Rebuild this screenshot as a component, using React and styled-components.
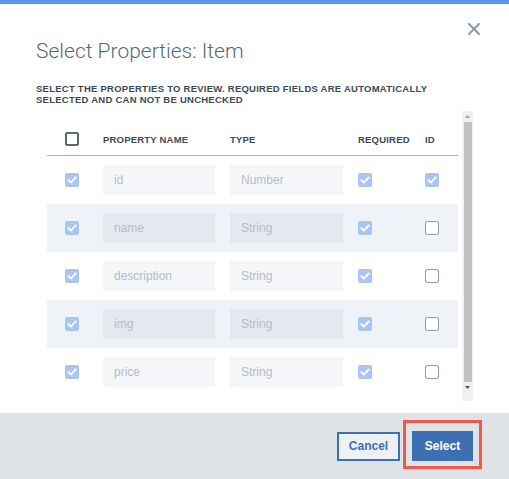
import React from "react";
import styled, { createGlobalStyle } from "styled-components";

const GlobalStyle = createGlobalStyle`
  html, body {
    margin: 0;
    padding: 0;
    background: #ffffff;
  }
  * {
    box-sizing: border-box;
  }
`;

const properties = [
  { name: "id", type: "Number", isId: true },
  { name: "name", type: "String", isId: false },
  { name: "description", type: "String", isId: false },
  { name: "img", type: "String", isId: false },
  { name: "price", type: "String", isId: false },
];

const CheckMark = () => (
  <svg width="10" height="8" viewBox="0 0 10 8">
    <path
      d="M1.2 4.2 L3.8 6.6 L8.8 1.4"
      fill="none"
      stroke="#ffffff"
      strokeWidth="1.8"
      strokeLinecap="round"
      strokeLinejoin="round"
    />
  </svg>
);

const Checkbox = ({ checked, strong }) => (
  <Box checked={checked} strong={strong}>
    {checked && <CheckMark />}
  </Box>
);

const App = () => {
  return (
    <>
      <GlobalStyle />
      <Modal>
        <TopBar />
        <Body>
          <CloseButton aria-label="close">
            <svg width="12" height="12" viewBox="0 0 12 12">
              <path
                d="M1 1 L11 11 M11 1 L1 11"
                stroke="#8c9ba5"
                strokeWidth="2"
                strokeLinecap="square"
              />
            </svg>
          </CloseButton>
          <Title>Select Properties: Item</Title>
          <Subtitle>
            Select the properties to review. Required fields are automatically
            selected and can not be unchecked
          </Subtitle>
          <TableWrap>
            <Table>
              <HeaderRow>
                <Cell>
                  <Checkbox strong />
                </Cell>
                <HeadLabel>Property Name</HeadLabel>
                <HeadLabel>Type</HeadLabel>
                <HeadLabel>Required</HeadLabel>
                <HeadLabel>ID</HeadLabel>
              </HeaderRow>
              {properties.map((prop, i) => (
                <Row key={prop.name} shaded={i % 2 === 1}>
                  <Cell>
                    <Checkbox checked />
                  </Cell>
                  <Field shaded={i % 2 === 1}>{prop.name}</Field>
                  <Field shaded={i % 2 === 1}>{prop.type}</Field>
                  <Cell>
                    <Checkbox checked />
                  </Cell>
                  <Cell>
                    <Checkbox checked={prop.isId} />
                  </Cell>
                </Row>
              ))}
            </Table>
            <ScrollBar>
              <ScrollArrow>
                <svg width="5" height="3" viewBox="0 0 5 3">
                  <path d="M0 3 L2.5 0 L5 3 Z" fill="#a3a3a3" />
                </svg>
              </ScrollArrow>
              <ScrollThumb />
              <ScrollArrow>
                <svg width="5" height="3" viewBox="0 0 5 3">
                  <path d="M0 0 L2.5 3 L5 0 Z" fill="#505050" />
                </svg>
              </ScrollArrow>
            </ScrollBar>
          </TableWrap>
        </Body>
        <Footer>
          <SecondaryButton>Cancel</SecondaryButton>
          <Highlight>
            <PrimaryButton>Select</PrimaryButton>
          </Highlight>
        </Footer>
      </Modal>
    </>
  );
};

export default App;

const Modal = styled.div`
  width: 509px;
  height: 479px;
  display: flex;
  flex-direction: column;
  background: #ffffff;
  font-family: "Liberation Sans", Arial, sans-serif;
  overflow: hidden;
`;

const TopBar = styled.div`
  height: 4px;
  background: #5596e6;
  flex-shrink: 0;
`;

const Body = styled.div`
  position: relative;
  flex: 1;
  padding: 0 36px;
  display: flex;
  flex-direction: column;
`;

const CloseButton = styled.button`
  position: absolute;
  top: 19px;
  right: 29px;
  width: 12px;
  height: 12px;
  padding: 0;
  border: none;
  background: transparent;
  display: flex;
  cursor: pointer;
`;

const Title = styled.h1`
  margin: 33px 0 0;
  font-family: Roboto, "Liberation Sans", sans-serif;
  font-weight: 300;
  font-size: 21px;
  line-height: 28px;
  color: #5a6872;
`;

const Subtitle = styled.p`
  margin: 18px 0 0;
  font-size: 9.5px;
  line-height: 11px;
  font-weight: 700;
  letter-spacing: 0.25px;
  text-transform: uppercase;
  color: #3d4a54;
`;

const TableWrap = styled.div`
  margin-top: 6px;
  padding-left: 11px;
  height: 290px;
  display: flex;
  gap: 4px;
  overflow: hidden;
`;

const Table = styled.div`
  flex: 1;
  display: flex;
  flex-direction: column;
`;

const columns = `
  display: grid;
  grid-template-columns: 38px 127px 128px 67px 1fr;
  padding-left: 18px;
  align-items: center;
  flex-shrink: 0;
`;

const HeaderRow = styled.div`
  ${columns}
  height: 45px;
  padding-top: 12px;
  border-bottom: 1px solid #8cb6ec;
`;

const HeadLabel = styled.div`
  font-size: 9.5px;
  font-weight: 700;
  letter-spacing: 0.2px;
  text-transform: uppercase;
  color: #3d4a54;
`;

const Row = styled.div`
  ${columns}
  height: 48px;
  background: ${(p) => (p.shaded ? "#eff2f6" : "#ffffff")};
`;

const Cell = styled.div`
  display: flex;
  align-items: center;
`;

const Field = styled.div`
  width: calc(100% - 15px);
  height: 30px;
  padding-left: 11px;
  display: flex;
  align-items: center;
  font-size: 12px;
  color: #b4bcc4;
  background: ${(p) => (p.shaded ? "#e5e9ef" : "#f4f6fa")};
`;

const Box = styled.span`
  width: 14px;
  height: 14px;
  border-radius: 2px;
  display: flex;
  align-items: center;
  justify-content: center;
  background: ${(p) => (p.checked ? "#a7c7f2" : "#ffffff")};
  border: ${(p) =>
    p.checked
      ? "none"
      : p.strong
      ? "2px solid #5a6872"
      : "1.5px solid #8c9ba5"};
`;

const ScrollBar = styled.div`
  width: 11px;
  display: flex;
  flex-direction: column;
  background: #f1f1f1;
`;

const ScrollArrow = styled.div`
  height: 11px;
  display: flex;
  align-items: center;
  justify-content: center;
`;

const ScrollThumb = styled.div`
  margin: 0 1.5px;
  height: 260px;
  background: #c1c1c1;
`;

const Footer = styled.div`
  height: 66px;
  flex-shrink: 0;
  background: #dfe3e6;
  display: flex;
  align-items: center;
  justify-content: flex-end;
  gap: 12px;
  padding-right: 36px;
`;

const ButtonBase = styled.button`
  height: 30px;
  font-family: "Liberation Sans", Arial, sans-serif;
  font-size: 12px;
  font-weight: 700;
  cursor: pointer;
`;

const SecondaryButton = styled(ButtonBase)`
  width: 63px;
  height: 29px;
  background: #eef1f4;
  border: 2px solid #3d70b2;
  color: #3d70b2;
`;

const Highlight = styled.div`
  position: relative;
  display: flex;
  &::after {
    content: "";
    position: absolute;
    top: -11px;
    bottom: -8px;
    left: -9px;
    right: -9px;
    border: 3px solid #f2574a;
    pointer-events: none;
  }
`;

const PrimaryButton = styled(ButtonBase)`
  width: 61px;
  background: #3d70b2;
  border: none;
  color: #ffffff;
`;
